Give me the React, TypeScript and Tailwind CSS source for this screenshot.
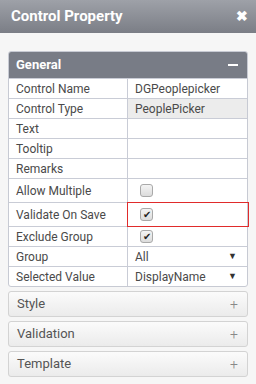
import React from "react";

type Row = {
  label: string;
  value?: string;
  kind?: "text" | "readonly" | "check" | "select";
  checked?: boolean;
  tall?: boolean;
  highlight?: boolean;
};

const rows: Row[] = [
  { label: "Control Name", value: "DGPeoplepicker" },
  { label: "Control Type", value: "PeoplePicker", kind: "readonly" },
  { label: "Text" },
  { label: "Tooltip" },
  { label: "Remarks" },
  { label: "Allow Multiple", kind: "check", checked: false, tall: true },
  { label: "Validate On Save", kind: "check", checked: true, tall: true, highlight: true },
  { label: "Exclude Group", kind: "check", checked: true },
  { label: "Group", value: "All", kind: "select" },
  { label: "Selected Value", value: "DisplayName", kind: "select" },
];

const Checkbox = ({ checked }: { checked?: boolean }) => (
  <span className="flex h-[13px] w-[13px] items-center justify-center rounded-[3px] border border-[#a9a9a9] bg-gradient-to-b from-[#f4f4f4] to-[#dcdcdc] text-[10px] leading-none text-[#222]">
    {checked ? "✔" : ""}
  </span>
);

const Collapsed = ({ title }: { title: string }) => (
  <div className="flex h-[26px] items-center justify-between rounded-[3px] border border-[#d3d3d3] bg-gradient-to-b from-[#fbfbfb] to-[#ebebeb] pl-[8px] pr-[9px]">
    <span className="text-[13px] text-[#555]">{title}</span>
    <span className="text-[14px] font-light text-[#888]">+</span>
  </div>
);

export default function App() {
  return (
    <div
      className="h-[384px] w-[256px] overflow-hidden bg-[#f6f6f6]"
      style={{ fontFamily: "Roboto, 'Liberation Sans', sans-serif" }}
    >
      <div className="flex h-[33px] items-center justify-between bg-gradient-to-b from-[#9ea1a8] to-[#7b7e86] pl-[11px] pr-[8px]">
        <span className="text-[15px] font-bold text-white">Control Property</span>
        <span className="text-[14px] font-bold text-white">✖</span>
      </div>

      <div className="flex flex-col gap-[4px] px-[8px] pt-[18px]">
        <div className="rounded-[3px] border border-[#c7cad3] bg-white">
          <div className="flex h-[26px] items-center justify-between rounded-t-[2px] bg-[#787c86] pl-[7px] pr-[9px]">
            <span className="text-[13px] font-bold text-white">General</span>
            <span className="h-[2px] w-[10px] bg-white" />
          </div>
          {rows.map((r, i) => (
            <div
              key={i}
              className={`grid grid-cols-[119px_1fr] border-t border-[#c9ccd6] text-[12px] text-[#4a4a4a] ${
                r.tall ? "h-[24px]" : "h-[20px]"
              }`}
            >
              <div className="flex items-center border-r border-[#c9ccd6] pl-[7px]">{r.label}</div>
              <div
                className={`relative flex items-center justify-between pl-[7px] pr-[10px] ${
                  r.kind === "readonly" ? "bg-[#ececec]" : ""
                }`}
              >
                {r.highlight && (
                  <span className="absolute -top-px -bottom-px -left-px -right-[2px] border border-[#e02b2b]" />
                )}
                {r.kind === "check" ? (
                  <span className="ml-[5px]">
                    <Checkbox checked={r.checked} />
                  </span>
                ) : (
                  <span>{r.value}</span>
                )}
                {r.kind === "select" && <span className="text-[9px] text-[#333]">▼</span>}
              </div>
            </div>
          ))}
        </div>

        <Collapsed title="Style" />
        <Collapsed title="Validation" />
        <Collapsed title="Template" />
      </div>
    </div>
  );
}
